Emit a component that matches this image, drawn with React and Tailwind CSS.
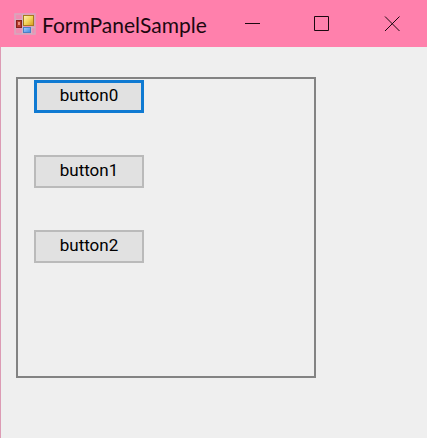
import React from 'react';

function AppIcon() {
  return (
    <svg width="22" height="22" viewBox="0 0 22 22" aria-hidden="true" className="shrink-0">
      <defs>
        <linearGradient id="gold" x1="0" y1="0" x2="1" y2="1">
          <stop offset="0" stopColor="#fff3b8" />
          <stop offset="0.5" stopColor="#f3d45c" />
          <stop offset="1" stopColor="#d69a1c" />
        </linearGradient>
        <linearGradient id="blue" x1="0" y1="0" x2="1" y2="1">
          <stop offset="0" stopColor="#a9d0ff" />
          <stop offset="1" stopColor="#3f86dc" />
        </linearGradient>
      </defs>
      <rect x="1" y="1" width="20" height="20" fill="#f08db2" stroke="#d5a9bd" strokeWidth="1.5" />
      <path d="M8.5 1v20M1 7h8M1 14.5h20M17.5 13v8" stroke="#cfb4c4" strokeWidth="1.5" fill="none" />
      <rect x="9.5" y="2.5" width="10" height="10" fill="url(#gold)" stroke="#a77a1c" />
      <rect x="2.5" y="7.5" width="5" height="7" fill="#b53a2c" stroke="#84231d" />
      <rect x="4" y="9" width="2" height="3" fill="#e98f7c" />
      <rect x="9.5" y="14.5" width="7" height="5" fill="url(#blue)" stroke="#4c7fc4" />
    </svg>
  );
}

function CaptionButton({ label, children }) {
  return (
    <button type="button" aria-label={label} className="flex w-[70px] items-center justify-center">
      <svg width="16" height="16" viewBox="0 0 16 16" fill="none" stroke="#1c0810" aria-hidden="true">
        {children}
      </svg>
    </button>
  );
}

function FormButton({ focused, children }) {
  const border = focused ? 'border-[3px] border-[#0f7ad2]' : 'border-2 border-[#bababa]';
  return (
    <button
      type="button"
      className={`flex h-[33px] w-[110px] items-center justify-center bg-[#e1e1e1] pb-0.5 font-[Roboto,sans-serif] text-[17px] leading-none text-black ${border}`}
    >
      {children}
    </button>
  );
}

export default function App() {
  return (
    <div className="flex min-h-screen flex-col bg-[#efefef]">
      <header className="flex h-[47px] items-stretch bg-[#ff80ac]">
        <div className="flex min-w-0 flex-1 items-center gap-1.5 pl-3.5">
          <AppIcon />
          <h1 className="whitespace-nowrap pt-0.5 font-[Lato,sans-serif] text-[21px] text-[#1c0810]">
            FormPanelSample
          </h1>
        </div>
        <div className="flex">
          <CaptionButton label="Minimize">
            <path d="M1 7.5h15" />
          </CaptionButton>
          <CaptionButton label="Maximize">
            <path d="M0.5 0.5h14v14h-14z" />
          </CaptionButton>
          <CaptionButton label="Close">
            <path d="M1 0.5l14.5 14.5M15.5 0.5l-14.5 14.5" />
          </CaptionButton>
        </div>
      </header>
      <main className="flex-1 border-l border-[#dc9bb4] px-[15px] py-[30px]">
        <section className="flex min-h-[301px] max-w-[300px] flex-col items-start gap-[42px] border-2 border-[#838383] px-4 py-px">
          <FormButton focused>button0</FormButton>
          <FormButton>button1</FormButton>
          <FormButton>button2</FormButton>
        </section>
      </main>
    </div>
  );
}
